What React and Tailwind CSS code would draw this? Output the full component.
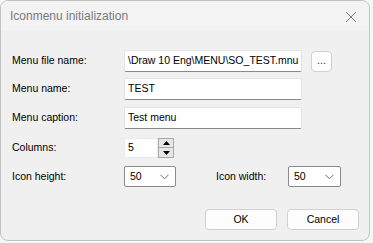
import React from "react";

function TextBox({ children, w = "w-[178px]" }) {
  return (
    <div className={`${w} h-[22px] bg-white border border-[#e3e3e3] border-b-[#8a8a8a] rounded-[2px] flex items-center pl-[3px] overflow-hidden whitespace-nowrap`}>
      {children}
    </div>
  );
}

function Chevron() {
  return (
    <svg width="9" height="6" viewBox="0 0 9 6" className="text-[#6a6a6a]">
      <path d="M0.5 0.8 L4.5 4.8 L8.5 0.8" fill="none" stroke="currentColor" strokeWidth="1" />
    </svg>
  );
}

function Select({ value, w }) {
  return (
    <div className={`${w} h-[21px] bg-white border border-[#8a8a8a] rounded-[2px] flex items-center justify-between pl-[5px] pr-[6px]`}>
      <span>{value}</span>
      <Chevron />
    </div>
  );
}

function Btn({ children, className = "" }) {
  return (
    <div className={`bg-[#fdfdfd] border border-[#d0d0d0] rounded-[4px] flex items-center justify-center ${className}`}>
      {children}
    </div>
  );
}

export default function App() {
  return (
    <div className="w-[373px] h-[243px] bg-[#f7f7f7] font-['Liberation_Sans',Arial,sans-serif] text-[10.5px] text-black">
      <div className="w-[370px] h-[241px] rounded-[8px] border border-[#c2c2c2] bg-[#f0f0f0] overflow-hidden flex flex-col">
        <div className="h-[30px] bg-[#f3f3f3] flex items-center justify-between pl-[9px] pr-[6px] shrink-0">
          <span className="text-[12px] text-[#7a7a7a]">Iconmenu initialization</span>
          <svg width="12" height="12" viewBox="0 0 12 12" className="mr-[6px] mt-[1px]">
            <path d="M1 1 L11 11 M11 1 L1 11" stroke="#7a7a7a" strokeWidth="1" />
          </svg>
        </div>
        <div className="flex flex-col pl-[11px] pr-[10px] pt-[19px]">
          <div className="flex items-center h-[22px]">
            <span className="w-[112px]">Menu file name:</span>
            <TextBox>\Draw 10 Eng\MENU\SO_TEST.mnu</TextBox>
            <Btn className="ml-[9px] w-[21px] h-[21px] text-[#1a1a8a] leading-none pb-[2px]">...</Btn>
          </div>
          <div className="flex items-center h-[22px] mt-[6px]">
            <span className="w-[112px]">Menu name:</span>
            <TextBox>TEST</TextBox>
          </div>
          <div className="flex items-center h-[22px] mt-[7px]">
            <span className="w-[112px]">Menu caption:</span>
            <TextBox>Test menu</TextBox>
          </div>
          <div className="flex items-center h-[20px] mt-[9px]">
            <span className="w-[112px]">Columns:</span>
            <div className="w-[34px] h-[20px] bg-white border border-[#ececec] flex items-center pl-[3px]">5</div>
            <div className="flex flex-col w-[16px] h-[20px]">
              <div className="h-[10px] bg-[#e6e6e6] border border-[#a8a8a8] flex items-center justify-center">
                <svg width="7" height="4" viewBox="0 0 7 4"><path d="M3.5 0 L7 4 L0 4 Z" fill="#000" /></svg>
              </div>
              <div className="h-[10px] bg-[#e6e6e6] border border-[#a8a8a8] border-t-0 flex items-center justify-center">
                <svg width="7" height="4" viewBox="0 0 7 4"><path d="M0 0 L7 0 L3.5 4 Z" fill="#000" /></svg>
              </div>
            </div>
          </div>
          <div className="flex items-center h-[21px] mt-[8px]">
            <span className="w-[112px]">Icon height:</span>
            <Select value="50" w="w-[52px]" />
            <span className="ml-[40px] w-[72px]">Icon width:</span>
            <Select value="50" w="w-[53px]" />
          </div>
          <div className="flex justify-end gap-[10px] mt-[22px]">
            <Btn className="w-[72px] h-[21px]">OK</Btn>
            <Btn className="w-[72px] h-[21px]">Cancel</Btn>
          </div>
        </div>
      </div>
    </div>
  );
}
